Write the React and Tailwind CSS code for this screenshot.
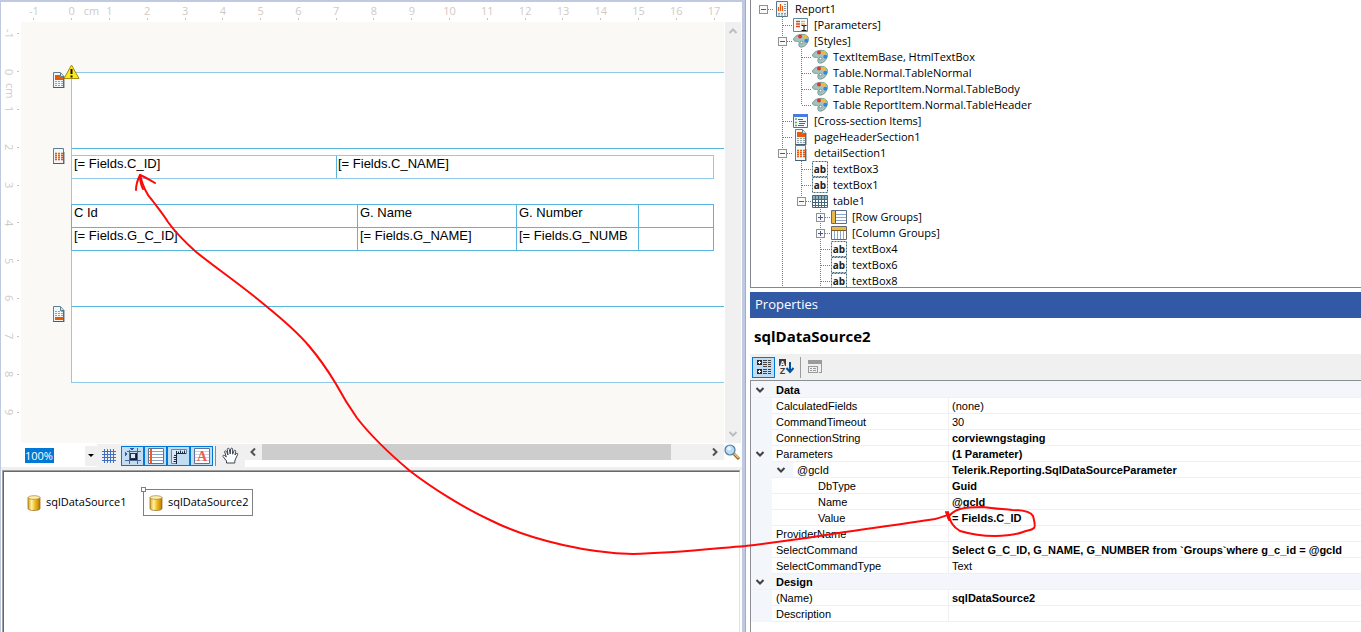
import React, { useState } from "react";

// ---------- Data ----------
const rulerX = [-1, 0, 1, 2, 3, 4, 5, 6, 7, 8, 9, 10, 11, 12, 13, 14, 15, 16, 17];
const rulerY = [-1, 0, 1, 2, 3, 4, 5, 6, 7, 8, 9];

// cols: one entry per tree column, the last one is the node's own column
const treeRows = [
  { cols: ["root"], icon: "report", text: "Report1" },
  { cols: ["blank", "tee"], icon: "params", text: "[Parameters]" },
  { cols: ["blank", "minus"], icon: "palette", text: "[Styles]" },
  { cols: ["blank", "line", "tee"], icon: "palette", text: "TextItemBase, HtmlTextBox" },
  { cols: ["blank", "line", "tee"], icon: "palette", text: "Table.Normal.TableNormal" },
  { cols: ["blank", "line", "tee"], icon: "palette", text: "Table ReportItem.Normal.TableBody" },
  { cols: ["blank", "line", "end"], icon: "palette", text: "Table ReportItem.Normal.TableHeader" },
  { cols: ["blank", "tee"], icon: "cross", text: "[Cross-section Items]" },
  { cols: ["blank", "tee"], icon: "header", text: "pageHeaderSection1" },
  { cols: ["blank", "minus"], icon: "detail", text: "detailSection1" },
  { cols: ["blank", "line", "tee"], icon: "textbox", text: "textBox3" },
  { cols: ["blank", "line", "tee"], icon: "textbox", text: "textBox1" },
  { cols: ["blank", "line", "minusEnd"], icon: "table", text: "table1" },
  { cols: ["blank", "line", "blank", "plus"], icon: "rows", text: "[Row Groups]" },
  { cols: ["blank", "line", "blank", "plus"], icon: "columns", text: "[Column Groups]" },
  { cols: ["blank", "line", "blank", "tee"], icon: "textbox", text: "textBox4" },
  { cols: ["blank", "line", "blank", "tee"], icon: "textbox", text: "textBox6" },
  { cols: ["blank", "line", "blank", "tee"], icon: "textbox", text: "textBox8" },
];

const propRows = [
  { category: true, name: "Data" },
  { name: "CalculatedFields", value: "(none)" },
  { name: "CommandTimeout", value: "30" },
  { name: "ConnectionString", value: "corviewngstaging", bold: true },
  { name: "Parameters", value: "(1 Parameter)", bold: true, open: true },
  { name: "@gcId", value: "Telerik.Reporting.SqlDataSourceParameter", bold: true, level: 1, open: true },
  { name: "DbType", value: "Guid", bold: true, level: 2 },
  { name: "Name", value: "@gcId", bold: true, level: 2 },
  { name: "Value", value: "= Fields.C_ID", bold: true, level: 2 },
  { name: "ProviderName", value: "" },
  { name: "SelectCommand", value: "Select G_C_ID, G_NAME, G_NUMBER from `Groups`where g_c_id = @gcId", bold: true },
  { name: "SelectCommandType", value: "Text" },
  { category: true, name: "Design" },
  { name: "(Name)", value: "sqlDataSource2", bold: true },
  { name: "Description", value: "" },
];

// ---------- Icons ----------
function PageIcon({ kind }) {
  return (
    <svg width="16" height="16" viewBox="0 0 16 16" className="block shrink-0">
      <path
        d={kind === "detail" ? "M2.5 .5h10v15h-10z" : "M2.5 .5h7l3 3.500v11.500h-10z"}
        fill="#f1f6f9"
        stroke="#5f7f92"
      />
      {kind !== "detail" && <path d="M9.500 1v3.500h3" fill="#dbe6ec" stroke="#5f7f92" />}
      {kind === "header" && (
        <g>
          <path d="M4 3h5v2h3v3H4z" fill="#e85a08" />
          <path d="M4 9.500h8M4 11.500h8M4 13.500h8" stroke="#8fa3ae" strokeDasharray="2 1" />
        </g>
      )}
      {kind === "footer" && (
        <g>
          <path d="M4 11h8v3H4z" fill="#e85a08" />
          <path d="M4 5.500h8M4 7.500h8M4 9.500h8" stroke="#8fa3ae" strokeDasharray="2 1" />
        </g>
      )}
      {kind === "detail" && (
        <path d="M4 5.500h8M4 7.500h8M4 9.500h8M4 11.500h8" stroke="#e8590c" strokeDasharray="2 1" strokeWidth="1.3" />
      )}
      <path d="M2 15.500h11M13 4v12" stroke="#405868" strokeWidth=".8" />
    </svg>
  );
}

function TreeIcon({ name }) {
  if (name === "header" || name === "detail") return <PageIcon kind={name} />;

  return (
    <svg width="16" height="16" viewBox="0 0 16 16" className="block shrink-0">
      {name === "report" && (
        <g>
          <path d="M2.5 .5h11v15h-11z" fill="#f1f6f9" stroke="#55788c" />
          <path d="M4.500 10V6M6.500 10V3M8.500 10V5" stroke="#e8590c" strokeWidth="1.2" />
          <path d="M10 3.500h3M10 5.500h3M10 7.500h3M10 9.500h3M4 12.500h8M4 14h8" stroke="#8299a6" strokeDasharray="2 1" />
        </g>
      )}
      {name === "params" && (
        <g>
          <path d="M.5 1.500h14v13H.5z" fill="#fafcfc" stroke="#5b8a96" />
          <path d="M3 4.500h4M3 7h4M3 9.500h4" stroke="#d9471c" strokeWidth="1.5" />
          <path d="M8 4.500h4M8 7h4" stroke="#f2a878" strokeWidth="1.5" />
          <path d="M8.500 8.500l2 0 .5 1 .5-1h2M11 9v4.500M8.500 13.500h5" stroke="#111" fill="none" />
        </g>
      )}
      {name === "palette" && (
        <g>
          <path
            d="M4 2.500C8 .500 14 1 15.300 4.500c.7 3-1 7-4.500 9-2.500 1.300-5 .700-5-1.500 0-1.500 1-2.500 0-3.200C4.500 8 1.500 8.800.700 7.200 0 5.500 2 3.300 4 2.500z"
            fill="#a3c3bd"
            stroke="#658b88"
            strokeWidth=".8"
          />
          <circle cx="7" cy="3.500" r="2" fill="#e5342d" />
          <circle cx="12" cy="3.800" r="2" fill="#eebe28" />
          <circle cx="13.300" cy="7.700" r="2" fill="#3d83d8" />
          <circle cx="8.500" cy="9.500" r="1.300" fill="#fff" stroke="#5b8582" strokeWidth=".8" />
        </g>
      )}
      {name === "cross" && (
        <g>
          <path d="M.5 1.500h14v13H.5z" fill="#f4f8ff" stroke="#4f6fa8" />
          <path d="M0 1h15v3H0z" fill="#4a7be0" />
          <path d="M2 6h2M2 9.500h2M2 12.500h2" stroke="#6aa84f" strokeWidth="1.500" />
          <path d="M5 6.500h5M6 8.500h7M6 10.500h6M5 12.500h6" stroke="#55657c" />
        </g>
      )}
      {name === "textbox" && (
        <g>
          <path d="M.5 .5h15v15H.5z" fill="#fff" stroke="#47687b" strokeDasharray="2 1" />
          <text x="8" y="11.500" textAnchor="middle" fontSize="10" fontWeight="700" fontFamily="Open Sans, sans-serif" fill="#222">
            ab
          </text>
        </g>
      )}
      {name === "table" && (
        <g>
          <path d="M.5 2.500h15v12H.5z" fill="#fff" stroke="#47687b" />
          <path d="M1 3h14v3H1z" fill="#8fb0bd" />
          <path d="M1 6.500h14M1 9.500h14M1 12.500h14M3.500 3v11M6.500 3v11M9.500 3v11M12.500 3v11" stroke="#47687b" />
        </g>
      )}
      {name === "rows" && (
        <g>
          <path d="M.5 1.500h15v13H.5z" fill="#fff" stroke="#5f6f86" />
          <path d="M1 2h3v12H1z" fill="#e9b949" />
          <path d="M4.500 2v12" stroke="#7c5a22" />
          <path d="M5 5.500h10M5 8.500h10M5 11.500h10" stroke="#8ca6cf" />
        </g>
      )}
      {name === "columns" && (
        <g>
          <path d="M.5 1.500h15v13H.5z" fill="#fff" stroke="#6a6a6a" />
          <path d="M1 2h14v3H1z" fill="#e9b949" />
          <path d="M1 5.500h14" stroke="#7c5a22" />
          <path d="M3.500 6v8M6.500 6v8M9.500 6v8M12.500 6v8" stroke="#8ca6cf" />
        </g>
      )}
    </svg>
  );
}

// dotted connector of one tree column, with the +/- box where the node opens
function Branch({ type }) {
  const box = ["root", "minus", "minusEnd", "plus"].includes(type);
  const up = ["line", "tee", "end", "minus", "minusEnd", "plus"].includes(type);
  const down = ["line", "tee", "minus", "plus"].includes(type);
  const across = type !== "line" && type !== "blank";

  return (
    <svg width="19" height="16" viewBox="0 0 19 16" className="block shrink-0" shapeRendering="crispEdges">
      {up && <path d="M9.500 0v8" stroke="#7a7a7a" strokeDasharray="1 1" />}
      {down && <path d="M9.500 8v8" stroke="#7a7a7a" strokeDasharray="1 1" />}
      {across && <path d="M10 8.500h9" stroke="#7a7a7a" strokeDasharray="1 1" />}
      {box && (
        <g>
          <rect x="5.500" y="4.500" width="8" height="8" fill="#fafafa" stroke="#919191" />
          <path d="M7 8.500h5" stroke="#3c5aa8" />
          {type === "plus" && <path d="M9.500 6v5" stroke="#3c5aa8" />}
        </g>
      )}
    </svg>
  );
}

function Cylinder() {
  return (
    <svg width="14" height="16" viewBox="0 0 14 16" className="block shrink-0">
      <defs>
        <linearGradient id="gold" x1="0" x2="1" y1="0" y2="0">
          <stop offset="0" stopColor="#d9a520" />
          <stop offset=".3" stopColor="#fff0a8" />
          <stop offset=".6" stopColor="#f0b81c" />
          <stop offset="1" stopColor="#b87808" />
        </linearGradient>
      </defs>
      <path d="M1 2.500v11c0 1.200 2.500 2 6 2s6-.8 6-2v-11z" fill="url(#gold)" stroke="#8c6410" strokeWidth=".7" />
      <ellipse cx="7" cy="2.500" rx="6" ry="1.800" fill="#ffefb0" stroke="#a88434" strokeWidth=".7" />
    </svg>
  );
}

function Chevron({ dir = "down", className = "" }) {
  const turn = { down: 0, up: 180, left: 90, right: 270 }[dir];
  return (
    <svg width="10" height="10" viewBox="0 0 10 10" className={`block shrink-0 ${className}`}>
      <path d="M1.500 3L5 6.500 8.500 3" fill="none" stroke="currentColor" strokeWidth="2" transform={`rotate(${turn} 5 5)`} />
    </svg>
  );
}

// ---------- Designer ----------
function TopRuler() {
  return (
    <div className="grid h-5 shrink-0 grid-cols-[repeat(19,minmax(0,1fr))] pl-[14px] pr-[9px]">
      {rulerX.map((n) => (
        <div key={n} className="relative flex flex-col items-center">
          <span className="h-4 leading-[18px]">{n}</span>
          <span className="h-[2px] w-px bg-[#c9c4be]" />
          {n === 0 && <span className="absolute left-[31px] top-0 leading-[18px]">cm</span>}
        </div>
      ))}
    </div>
  );
}

function SideRuler() {
  return (
    <div className="-mt-[7px] grid h-[416px] w-5 shrink-0 grid-rows-[repeat(11,minmax(0,1fr))]">
      {rulerY.map((n) => (
        <div key={n} className="relative flex items-center justify-end gap-[2px] pr-[2px]">
          <span className="leading-[12px] [writing-mode:vertical-rl]">{n}</span>
          <span className="h-px w-[2px] bg-[#c9c4be]" />
          {n === 0 && <span className="absolute left-px top-[30px] leading-[16px] [writing-mode:vertical-rl]">cm</span>}
        </div>
      ))}
    </div>
  );
}

function Section({ kind, className, children }) {
  const top = kind === "header" ? "border-t-[#8fcbe8]" : "border-t-[#56b6df]";
  return (
    <section className={`flex ${className}`}>
      <div className="relative w-[50px] shrink-0">
        <div className="pl-[30px]">
          <PageIcon kind={kind} />
        </div>
        {kind === "header" && (
          <svg width="18" height="16" viewBox="0 0 18 16" className="absolute -top-2 right-[-10px] z-10">
            <path d="M8.500 1L16 14.500H1z" fill="#fdea1c" stroke="#a58a10" strokeLinejoin="round" />
            <path d="M8.500 5v5M8.500 11.500v2" stroke="#111" strokeWidth="2" />
          </svg>
        )}
      </div>
      <div className={`min-w-0 flex-1 border-l border-t border-l-[#8fcbe8] bg-white ${top}`}>{children}</div>
    </section>
  );
}

function Canvas() {
  const cell = "h-[23px] overflow-hidden border-l border-t border-[#56b6df] p-0 pl-[2px] align-top leading-[16px] font-normal text-left whitespace-nowrap";
  return (
    <div className="min-w-0 flex-1 overflow-hidden bg-[#faf9f5] pt-[50px] font-['Liberation_Sans',Arial,sans-serif] text-[13px] text-black">
      <Section kind="header" className="h-[76px]" />
      <Section kind="detail" className="h-[158px]">
        <div className="-ml-px mt-[6px] flex h-6 w-[643px] border border-[#8fcbe8] leading-[16px]">
          <div className="w-[265px] border-r border-[#56b6df] pl-[2px]">[= Fields.C_ID]</div>
          <div className="pl-px">[= Fields.C_NAME]</div>
        </div>
        <table className="-ml-px mt-[25px] w-[643px] table-fixed border-separate border-spacing-0 border-b border-r border-[#56b6df]">
          <colgroup>
            <col className="w-[286px]" />
            <col className="w-[159px]" />
            <col className="w-[122px]" />
            <col />
          </colgroup>
          <tbody>
            <tr>
              <th className={cell}>C Id</th>
              <th className={cell}>G. Name</th>
              <th className={cell}>G. Number</th>
              <td className={cell} />
            </tr>
            <tr>
              <td className={cell}>[= Fields.G_C_ID]</td>
              <td className={cell}>[= Fields.G_NAME]</td>
              <td className={cell}>[= Fields.G_NUMB</td>
              <td className={cell} />
            </tr>
          </tbody>
        </table>
      </Section>
      <Section kind="footer" className="h-[76px]" />
      <div className="ml-[50px] border-t border-[#8fcbe8]" />
    </div>
  );
}

function ToolBar() {
  const toggle = "flex h-5 w-[23px] items-center justify-center border border-[#0078d7] bg-[#c2dcf1]";
  return (
    <div className="flex h-[23px] shrink-0 pl-5">
      <div className="flex w-[76px] items-center bg-white pl-1">
        <input
          aria-label="Zoom"
          defaultValue="100%"
          className="h-[15px] w-[29px] bg-[#0078d7] font-['Open_Sans','Noto_Sans',sans-serif] text-[11px] leading-[15px] text-white outline-none"
        />
        <button aria-label="Zoom levels" className="ml-auto flex h-5 w-3 items-center justify-center bg-[#f0f0f0]">
          <svg width="6" height="4" viewBox="0 0 6 4">
            <path d="M0 0h6L3 3z" fill="#000" />
          </svg>
        </button>
      </div>
      <div className="flex w-[148px] shrink-0 items-center bg-[#f0f0f0]">
        <button aria-label="Grid" className="flex w-6 justify-center">
          <svg width="16" height="16" viewBox="0 0 16 16" shapeRendering="crispEdges">
            <path d="M3.500 1v14M6.500 1v14M9.500 1v14M12.500 1v14M1 3.500h14M1 6.500h14M1 9.500h14M1 12.500h14" stroke="#4470c4" />
          </svg>
        </button>
        <button aria-label="Snap to grid" aria-pressed="true" className={toggle}>
          <svg width="16" height="16" viewBox="0 0 16 16" className="shrink-0" shapeRendering="crispEdges">
            <path d="M4.500 2v14M12.500 0v16M0 12.500h16M2 3.500h14" stroke="#4a6796" />
            <path d="M5.500 5.500h5v5h-5z" fill="#dfe8f2" stroke="#26344c" />
            <path d="M11.500 5v7M5 11.500h7" stroke="#111c30" />
            <path d="M5 0h4L7 3zM0 4v4l3-2z" fill="#2d58b5" />
          </svg>
        </button>
        <button aria-label="Sections" aria-pressed="true" className={toggle}>
          <svg width="16" height="16" viewBox="0 0 16 16" className="shrink-0">
            <path d="M.5 .5h15v15H.5z" fill="#fff" stroke="#5b7396" />
            <path d="M1 3.500h14M1 6.500h14M1 9.500h14M1 12.500h14" stroke="#8aa0c4" />
            <path d="M3 1v14" stroke="#ee5a22" strokeWidth="2" />
          </svg>
        </button>
        <button aria-label="Rulers" aria-pressed="true" className={toggle}>
          <svg width="16" height="16" viewBox="0 0 16 16" className="shrink-0">
            <path d="M.5 15.500V1.500h15v4H5.500v10z" fill="#dce8f5" stroke="#6b87a8" />
            <path d="M5.500 5V3M7.500 5V3.500M9.500 5V2.500M11.500 5V3.500M13.500 5V2.500M5 5.500h10" stroke="#1d2a40" />
            <path d="M3 7.500h2M2.500 9.500h2.500M3 11.500h2M2.500 13.500h2.500M5.500 6v10" stroke="#1d2a40" />
          </svg>
        </button>
        <button aria-label="Text" aria-pressed="true" className={toggle}>
          <svg width="16" height="16" viewBox="0 0 16 16" className="shrink-0">
            <path d="M.5 .5h15v15H.5z" fill="#fff" stroke="#5b7396" />
            <path d="M1 3.500h14M1 6.500h14M1 9.500h14M1 12.500h14" stroke="#c8d2e2" />
            <text x="8" y="13" textAnchor="middle" fontSize="14" fontWeight="700" fontFamily="Liberation Serif, serif" fill="#f05a50">
              A
            </text>
          </svg>
        </button>
        <span className="ml-[2px] h-5 w-px bg-[#8c8c8c]" />
        <button aria-label="Pan" className="ml-[6px]">
          <svg width="17" height="17" viewBox="0 0 17 17">
            <path
              d="M4.500 16v-2L1 9.500C.5 8.500 1.800 7.800 2.700 8.600L4.300 10 2.700 5c-.3-1.300 1.300-1.700 1.800-.5L6 8 5.300 2.500C5.200 1 7 .8 7.300 2.200L8.200 7 8.700 2C9 .7 10.600.9 10.600 2.200V7.200L12 3.800c.5-1.100 1.900-.7 1.700.6L13 8l1.200-1.400c.9-.8 2-.1 1.400 1L13.500 12 12.800 14v2z"
              fill="#fff"
              stroke="#3c4653"
            />
          </svg>
        </button>
      </div>
      <div className="flex h-4 min-w-0 flex-1 items-center bg-[#f0f0f0]">
        <Chevron dir="left" className="ml-[3px] text-[#505050]" />
        <div className="ml-1 h-full w-[409px] bg-[#cdcdcd]" />
        <Chevron dir="right" className="ml-auto mr-1 text-[#505050]" />
      </div>
      <button aria-label="Zoom tool" className="w-[18px] self-start">
        <svg width="16" height="16" viewBox="0 0 16 16">
          <path d="M10 10l5 5" stroke="#8a6420" strokeWidth="3" />
          <path d="M10.500 10l4 4" stroke="#ecc862" strokeWidth="1.500" />
          <circle cx="6" cy="6" r="5" fill="#b6dcf6" stroke="#56789c" strokeWidth="1.200" />
          <circle cx="5" cy="4.500" r="2" fill="#eaf6ff" />
        </svg>
      </button>
    </div>
  );
}

function Tray() {
  return (
    <div className="flex min-h-0 flex-1 border-t-[3px] border-[#f0f0f0] pl-px pr-[2px]">
      <div className="flex-1 border-l border-t border-[#a0a0a0]">
        <div className="flex h-full items-start border-l border-r border-t border-[#696969] border-r-[#e3e3e3] pl-[20px] pt-[17px] text-[11px] text-black">
          <button className="flex h-[27px] w-[119px] items-center gap-[5px] pl-[3px]">
            <Cylinder />
            sqlDataSource1
          </button>
          <button className="relative flex h-[27px] items-center gap-[5px] border border-[#808080] pl-[5px] pr-[3px]">
            <Cylinder />
            sqlDataSource2
            <span className="absolute -left-[3px] -top-[3px] h-[5px] w-[5px] border border-[#808080] bg-white" />
          </button>
        </div>
      </div>
    </div>
  );
}

function Designer() {
  return (
    <div className="flex min-w-0 flex-col border-l border-r-[3px] border-t-2 border-[#bfcae2]">
      <div className="flex h-[441px] shrink-0 flex-col text-[11px] text-[#d0cac4]">
        <TopRuler />
        <div className="flex min-h-0 flex-1">
          <SideRuler />
          <Canvas />
          <div className="ml-px mr-px flex w-4 shrink-0 flex-col items-center justify-between bg-[#f0f0f0] py-1 text-[#bdbdbd]">
            <Chevron dir="up" />
            <Chevron />
          </div>
        </div>
      </div>
      <div className="h-px shrink-0" />
      <ToolBar />
      <Tray />
    </div>
  );
}

// ---------- Right side ----------
function Explorer() {
  return (
    <div className="h-72 shrink-0 overflow-hidden border-b border-l border-[#828790] pl-[3px] pt-px">
      {treeRows.map((row, i) => (
        <div key={i} className="flex h-4 items-center text-[11px] leading-4 whitespace-nowrap text-black">
          {row.cols.map((type, k) => (
            <Branch key={k} type={type} />
          ))}
          <span className="mr-[5px] ml-px">
            <TreeIcon name={row.icon} />
          </span>
          {row.text}
        </div>
      ))}
    </div>
  );
}

function PropertyBar() {
  return (
    <div className="flex h-[26px] shrink-0 items-center bg-[#f0f0f0] pl-[2px]">
      <button aria-label="Categorized" className="flex h-[21px] w-[23px] items-center justify-center border border-[#0078d7] bg-[#c2dcf1]">
        <svg width="16" height="16" viewBox="0 0 16 16" className="shrink-0" shapeRendering="crispEdges">
          <path d="M1 1h5v5H1zM1 10h5v5H1z" fill="#2b2b2b" />
          <path d="M2 3.500h3M3.500 2v3M2 12.500h3M3.500 11v3" stroke="#fff" />
          <path d="M7 1.500h4M12 1.500h3M7 3.500h4M12 3.500h3M7 5.500h4M12 5.500h3M7 7.500h4M12 7.500h3M7 10.500h4M12 10.500h3M7 12.500h4M12 12.500h3M7 14.500h4M12 14.500h3" stroke="#444" />
        </svg>
      </button>
      <button aria-label="Alphabetical" className="ml-1">
        <svg width="16" height="16" viewBox="0 0 16 16">
          <path d="M0 0h7v7H0z" fill="#3c3c3c" />
          <text x="3.500" y="6.500" textAnchor="middle" fontSize="7" fontWeight="700" fontFamily="Liberation Sans, sans-serif" fill="#fff">
            A
          </text>
          <text x="3.500" y="15" textAnchor="middle" fontSize="9" fontWeight="700" fontFamily="Liberation Sans, sans-serif" fill="#3c3c3c">
            Z
          </text>
          <path d="M11 3v9M7.500 9l3.500 4 3.500-4" fill="none" stroke="#00539c" strokeWidth="2" />
        </svg>
      </button>
      <span className="ml-[5px] h-[21px] w-px bg-[#9a9a9a]" />
      <button aria-label="Property pages" disabled className="ml-[7px]">
        <svg width="15" height="14" viewBox="0 0 15 14" shapeRendering="crispEdges">
          <path d="M0 0h14v4H0z" fill="#9b9b9b" />
          <path d="M.5 6.500h9v6h-9zM13.500 4v8.500H11" fill="none" stroke="#9b9b9b" />
          <path d="M2 8.500h2M5 8.500h3M2 10.500h2M5 10.500h3" stroke="#9b9b9b" />
        </svg>
      </button>
    </div>
  );
}

function PropertyGrid() {
  const [closed, setClosed] = useState({});
  const toggle = (name) => setClosed({ ...closed, [name]: !closed[name] });

  return (
    <div className="min-h-0 flex-1 border-l border-t border-[#8d8f94] font-['Liberation_Sans',Arial,sans-serif] text-[11px] text-black">
      <table className="w-full table-fixed border-separate border-spacing-0 border-t border-[#f3f6fb]">
        <colgroup>
          <col className="w-[21px]" />
          <col className="w-[177px]" />
          <col />
        </colgroup>
        <tbody className="leading-[13px] whitespace-nowrap">
          {propRows.map((row) => {
            const arrow = (
              <button aria-label={`Toggle ${row.name}`} onClick={() => toggle(row.name)} className="block">
                <Chevron dir={closed[row.name] ? "right" : "down"} className="text-[#404040]" />
              </button>
            );
            if (row.category) {
              return (
                <tr key={row.name} className="bg-[#f3f6fb]">
                  <td className="h-4 border-b border-[#eef1f6] p-0 pl-[4px]">{arrow}</td>
                  <th colSpan={2} className="border-b border-[#eef1f6] p-0 pt-[2px] pl-1 text-left font-bold">
                    {row.name}
                  </th>
                </tr>
              );
            }
            return (
              <tr key={row.name}>
                <td className="h-4 bg-[#f3f6fb] p-0 pl-[4px]">{row.open && !row.level && arrow}</td>
                <td className="border-b border-r border-[#f0f0f2] p-0">
                  <div className="flex h-[15px] items-center">
                    {row.level === 1 && <span className="flex h-[15px] w-[21px] items-center bg-[#f3f6fb] pl-[4px]">{arrow}</span>}
                    {row.level === 2 && <span className="w-[42px]" />}
                    <span className="pt-[2px] pl-1">{row.name}</span>
                  </div>
                </td>
                <td className={`border-b border-[#f0f0f2] p-0 pt-[2px] pl-[3px] ${row.bold ? "font-bold" : ""}`}>{row.value}</td>
              </tr>
            );
          })}
        </tbody>
      </table>
    </div>
  );
}

// red pen stroke that links the parameter value to the text box
function PenStroke() {
  return (
    <svg width="1361" height="632" viewBox="0 0 1361 632" className="pointer-events-none absolute left-0 top-0 z-20">
      <g fill="none" stroke="#ff0808" strokeWidth="2" strokeLinecap="round" strokeLinejoin="round">
        <path d="M140 175C142 183 146 194 152 200C158 208 163 214 168 222C175 232 184 241 195 251C213 266 240 284 266 306C282 319 299 334 309 346C321 360 330 374 336 384C343 397 350 408 357 418C371 436 391 455 410 471C432 488 464 508 490 520C512 531 536 539 563 545C585 550 610 553.500 633 554C670 553.500 710 549 745 546C780 542 815 537 845 532C880 527 910 523 935 519C940 518 944 516 948 515" />
        <path d="M136 190C136 184 138 179 140 175C145 177 150 180 155 183M140 175C140 180 141 185 143 189" />
        <path d="M946 512L949 520M948 518C950 514 954 511 960 509C968 507 975 507 983 507C995 509 1005 509 1012 510C1022 510 1031 512 1033 516C1034 520 1036 526 1034 528C1031 531 1027 530 1023 532C1015 535 1004 536 995 536C982 536 970 534 960 531C953 527 950 522 948 512" />
      </g>
    </svg>
  );
}

export default function App() {
  return (
    <div className="relative grid h-screen min-h-[632px] grid-cols-[746fr_615fr] overflow-hidden bg-white font-['Open_Sans','Noto_Sans',sans-serif]">
      <div className="grid min-w-0 border-r border-[#a9adb8]">
        <Designer />
      </div>
      <div className="flex min-w-0 flex-col pl-1">
        <Explorer />
        <h2 className="mt-1 flex h-[26px] shrink-0 items-center bg-[#3259a5] pl-[5px] text-[13px] text-white">Properties</h2>
        <div className="flex h-9 shrink-0 items-center pl-1 text-[15px] font-bold text-black">sqlDataSource2</div>
        <PropertyBar />
        <PropertyGrid />
      </div>
      <PenStroke />
    </div>
  );
}
